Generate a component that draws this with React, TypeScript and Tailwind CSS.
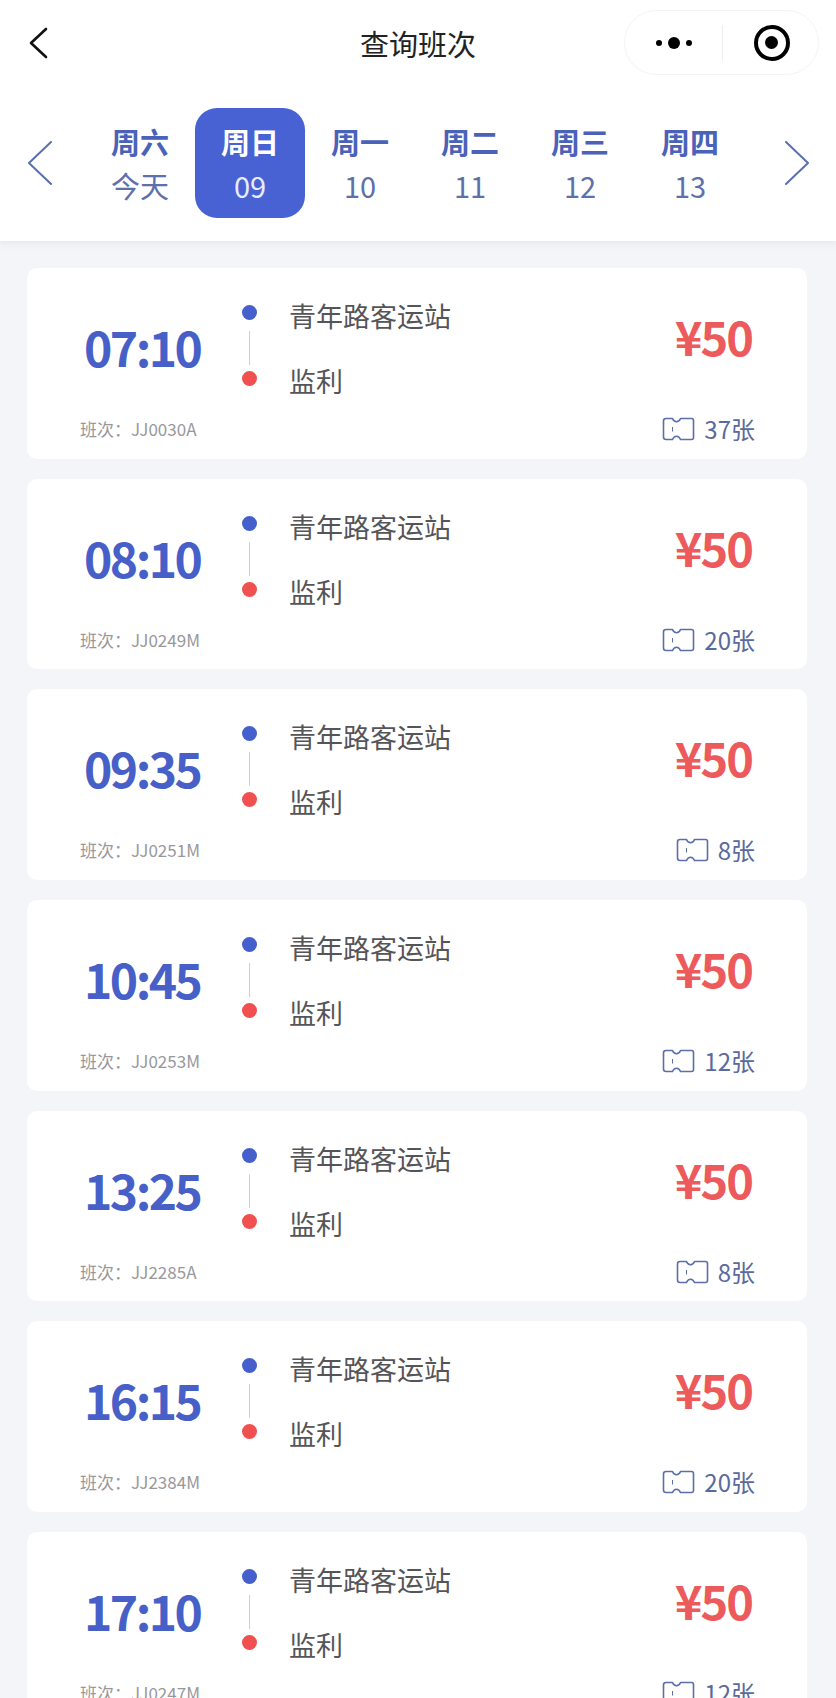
import React from 'react';

const DAYS = [
  { week: '周六', date: '今天' },
  { week: '周日', date: '09', active: true },
  { week: '周一', date: '10' },
  { week: '周二', date: '11' },
  { week: '周三', date: '12' },
  { week: '周四', date: '13' },
];

const TRIPS = [
  { time: '07:10', code: 'JJ0030A', left: '37张' },
  { time: '08:10', code: 'JJ0249M', left: '20张' },
  { time: '09:35', code: 'JJ0251M', left: '8张' },
  { time: '10:45', code: 'JJ0253M', left: '12张' },
  { time: '13:25', code: 'JJ2285A', left: '8张' },
  { time: '16:15', code: 'JJ2384M', left: '20张' },
  { time: '17:10', code: 'JJ0247M', left: '12张' },
];

const TicketIcon = () => (
  <svg width="33" height="24" viewBox="0 0 33 24" fill="none" stroke="#5a6fa8" strokeWidth="1.6" strokeLinejoin="round">
    <path d="M4 1.5H10.5C11.5 4 13 4.8 14.5 4.8C16 4.8 17.5 4 18.5 1.5H29.5C30.6 1.5 31.5 2.4 31.5 3.5V20.5C31.5 21.6 30.6 22.5 29.5 22.5H18.5C17.5 20 16 19.2 14.5 19.2C13 19.2 11.5 20 10.5 22.5H4C2.6 22.5 1.5 21.4 1.5 20V4C1.5 2.6 2.6 1.5 4 1.5Z" />
    <path d="M10.5 10V14.5" strokeWidth="1" />
  </svg>
);

const Chevron = ({ right }: { right?: boolean }) => (
  <svg width="26" height="44" viewBox="0 0 26 44" fill="none" stroke="#5a6fb0" strokeWidth="2" strokeLinecap="round" strokeLinejoin="round">
    <path d={right ? 'M2 1L24 22L2 43' : 'M24 1L2 22L24 43'} />
  </svg>
);

const TripCard = ({ trip }: { trip: (typeof TRIPS)[number] }) => (
  <div className="bg-white rounded-[10px] h-[190.67px] shrink-0 pl-[53px] pr-[52px] flex flex-col">
    <div className="flex items-start h-[142px]">
      <div className="w-[150px] pt-[46px] pl-[4px] text-[48px] leading-[64px] font-bold text-[#4760c8] tracking-[-2.5px] whitespace-nowrap">
        {trip.time}
      </div>
      <div className="w-[30px] ml-[4px] pt-[37px] flex flex-col items-center">
        <div className="w-[15px] h-[15px] rounded-full bg-[#4560cc]" />
        <div className="w-px h-[34px] mt-[11px] mb-[6px] bg-[#cfcfd4]" />
        <div className="w-[15px] h-[15px] rounded-full bg-[#f05050]" />
      </div>
      <div className="ml-[25px] pt-[32px] flex flex-col gap-[33px] text-[27px] leading-[32px] text-[#555558]">
        <span>青年路客运站</span>
        <span>监利</span>
      </div>
      <div className="ml-auto mr-[3px] pt-[36px] text-[47px] leading-[64px] font-bold text-[#ec5a5c] tracking-[-2px] whitespace-nowrap">
        ¥50
      </div>
    </div>
    <div className="flex items-center justify-between h-[26px] mt-[6px]">
      <span className="text-[17px] leading-[26px] text-[#98989c]">班次：{trip.code}</span>
      <div className="flex items-center gap-[9px]">
        <TicketIcon />
        <span className="text-[24px] leading-[26px] text-[#5a6a9c]">{trip.left}</span>
      </div>
    </div>
  </div>
);

export default function App() {
  return (
    <div className="h-[1698px] overflow-hidden bg-[#f4f5f9] font-['Noto_Sans_CJK_SC','Noto_Sans',sans-serif]">
      <header className="bg-white h-[241px] shadow-[0_2px_6px_rgba(210,213,225,0.5)]">
        <div className="relative h-[100px] flex items-start justify-center">
          <svg className="absolute left-[28px] top-[27px]" width="20" height="32" viewBox="0 0 20 32" fill="none" stroke="#111" strokeWidth="2.6" strokeLinecap="round" strokeLinejoin="round">
            <path d="M18 2L3 16L18 30" />
          </svg>
          <h1 className="pt-[21px] text-[29px] leading-[44px] font-normal text-[#222]">查询班次</h1>
          <div className="absolute left-[624px] top-[10px] w-[195px] h-[65px] rounded-full border border-[#f4f4f6] flex items-center">
            <div className="w-[97px] flex items-center justify-center gap-[6px]">
              <span className="w-[6px] h-[6px] rounded-full bg-black" />
              <span className="w-[12px] h-[12px] rounded-full bg-black" />
              <span className="w-[6px] h-[6px] rounded-full bg-black" />
            </div>
            <div className="w-px h-[36px] bg-[#eeeeef]" />
            <div className="flex-1 flex justify-center pl-[2px]">
              <div className="w-[36px] h-[36px] rounded-full border-[4px] border-black flex items-center justify-center">
                <span className="w-[13px] h-[13px] rounded-full bg-black" />
              </div>
            </div>
          </div>
        </div>
        <div className="flex items-center h-[110px] mt-[8px] pl-[27px] pr-[26px]">
          <Chevron />
          <div className="flex ml-[32px]">
            {DAYS.map(day => (
              <div
                key={day.week}
                className={`w-[110px] h-[110px] rounded-[22px] flex flex-col items-center pt-[14px] ${day.active ? 'bg-[#4862d4] text-white' : 'text-[#4a62b8]'}`}
              >
                <span className="text-[29px] leading-[38px] font-bold">{day.week}</span>
                <span className={`text-[29px] leading-[38px] mt-[6px] ${day.active ? 'text-[#e8ecff]' : 'text-[#5d70ab]'}`}>{day.date}</span>
              </div>
            ))}
          </div>
          <div className="ml-auto flex">
            <Chevron right />
          </div>
        </div>
      </header>
      <main className="flex flex-col gap-5 pl-[27px] pr-[29px] pt-[27px]">
        {TRIPS.map(trip => (
          <TripCard key={trip.time} trip={trip} />
        ))}
      </main>
    </div>
  );
}
